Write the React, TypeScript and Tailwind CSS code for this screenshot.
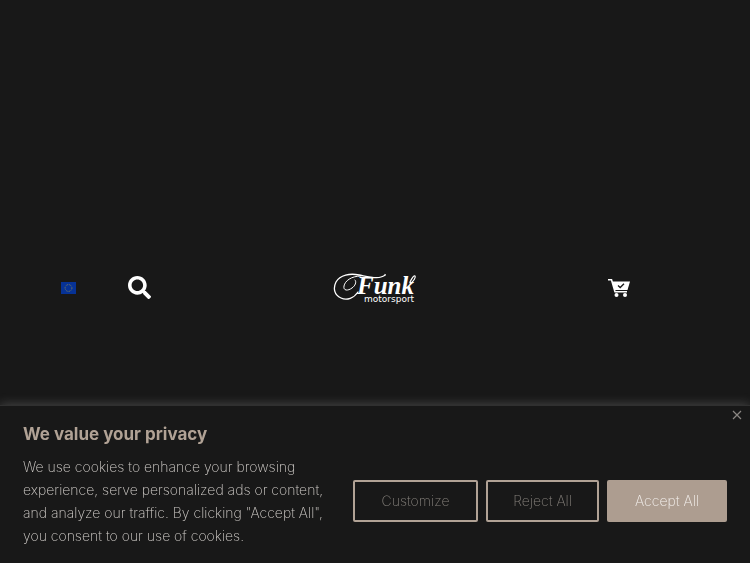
import React from 'react';
import { FaSearch } from 'react-icons/fa';

const EuFlag: React.FC = () => (
  <svg className="w-[15px] h-3" viewBox="0 0 15 12" aria-hidden="true">
    <rect width="15" height="12" fill="#063296" />
    <circle
      cx="7.5"
      cy="6"
      r="3.4"
      fill="none"
      stroke="#8d8a4c"
      strokeWidth="0.9"
      strokeDasharray="0.9 0.88"
    />
  </svg>
);

const Logo: React.FC = () => (
  <svg className="w-[84px] h-8" viewBox="0 0 84 32" role="img" aria-label="Funk Motorsport">
    <g fill="none" stroke="#fff" strokeLinecap="round">
      {/* outer swash, inner curl and the tail at the end */}
      <path
        strokeWidth="1.3"
        d="M25 20C21 26 14 29 8 26C1 23 0 16 3 10C7 3 17 1 26 3C36 5 43 7 48 5C51 4 53 3 52 2.500"
      />
      <path strokeWidth="1" d="M28 4C18 4 12 9 11 14C10 19 15 19 19 16C22 14 24 10 22 8" />
      <path strokeWidth="1.2" d="M77 10C79 6 81 3 82 4C83 5 81 9 77 12" />
    </g>
    <text
      x="24"
      y="22"
      fill="#fff"
      className="font-['Liberation_Serif',serif] text-[25px] italic font-bold"
    >
      Funk
    </text>
    <text x="31" y="30" fill="#fff" className="font-['DejaVu_Sans',sans-serif] text-[9px]">
      motorsport
    </text>
  </svg>
);

const CartIcon: React.FC = () => (
  <svg className="w-6 h-5" viewBox="0 0 24 20" fill="none" aria-hidden="true">
    <path d="M1 1.700H4.500L8 13.700H20" stroke="#fff" strokeWidth="1.600" />
    <path d="M5 3.500H23L20.500 12H7.500Z" fill="#fff" />
    <path d="M11 7.500L13.200 9.500L17 5.800" stroke="#181818" strokeWidth="1.300" />
    <circle cx="9.500" cy="17" r="2" fill="#fff" />
    <circle cx="18" cy="17" r="2" fill="#fff" />
  </svg>
);

const Header: React.FC = () => (
  <header className="w-full grid grid-cols-3 items-center">
    <div className="flex items-center gap-[52px] pl-[61px]">
      <button type="button" aria-label="Select region">
        <EuFlag />
      </button>
      <button type="button" aria-label="Search" className="text-white">
        <FaSearch size={23} />
      </button>
    </div>
    <a href="#home" className="justify-self-center">
      <Logo />
    </a>
    <a href="#cart" aria-label="Cart" className="justify-self-center mr-3">
      <CartIcon />
    </a>
  </header>
);

const CookieBanner: React.FC = () => (
  <section
    aria-labelledby="cookie-title"
    className="fixed inset-x-0 bottom-0 bg-[#181818] border-t border-[#303030] shadow-[0_-1px_10px_0_#acabab4d] px-[23px] py-4"
  >
    <button type="button" aria-label="Close" className="absolute top-1 right-2 text-[#8b8783]">
      <svg className="w-[10px] h-[10px]" viewBox="0 0 10 10" stroke="currentColor" strokeWidth="1.200">
        <path d="M1 1L9 9M9 1L1 9" />
      </svg>
    </button>
    <h2 id="cookie-title" className="text-[17px] leading-6 font-bold text-[#b1a295] mb-[9px]">
      We value your privacy
    </h2>
    <div className="flex items-center gap-5">
      <p className="flex-1 text-sm leading-[23px] font-extralight text-[#d0ccc8]">
        We use cookies to enhance your browsing experience, serve personalized ads or content, and
        analyze our traffic. By clicking "Accept All", you consent to our use of cookies.
      </p>
      <div className="flex shrink-0 gap-2 text-sm font-extralight">
        <button type="button" className="w-[125px] h-[42px] rounded-xs border-2 border-[#b1a295] text-[#85807b]">
          Customize
        </button>
        <button type="button" className="w-[113px] h-[42px] rounded-xs border-2 border-[#b1a295] text-[#85807b]">
          Reject All
        </button>
        <button type="button" className="w-[120px] h-[42px] rounded-xs bg-[#ad9d90] text-[#f5f1ee]">
          Accept All
        </button>
      </div>
    </div>
  </section>
);

const App: React.FC = () => {
  return (
    <div className="min-h-screen flex items-center bg-[#181818] pt-3 font-['Inter',sans-serif]">
      <Header />
      <CookieBanner />
    </div>
  );
};

export default App;
